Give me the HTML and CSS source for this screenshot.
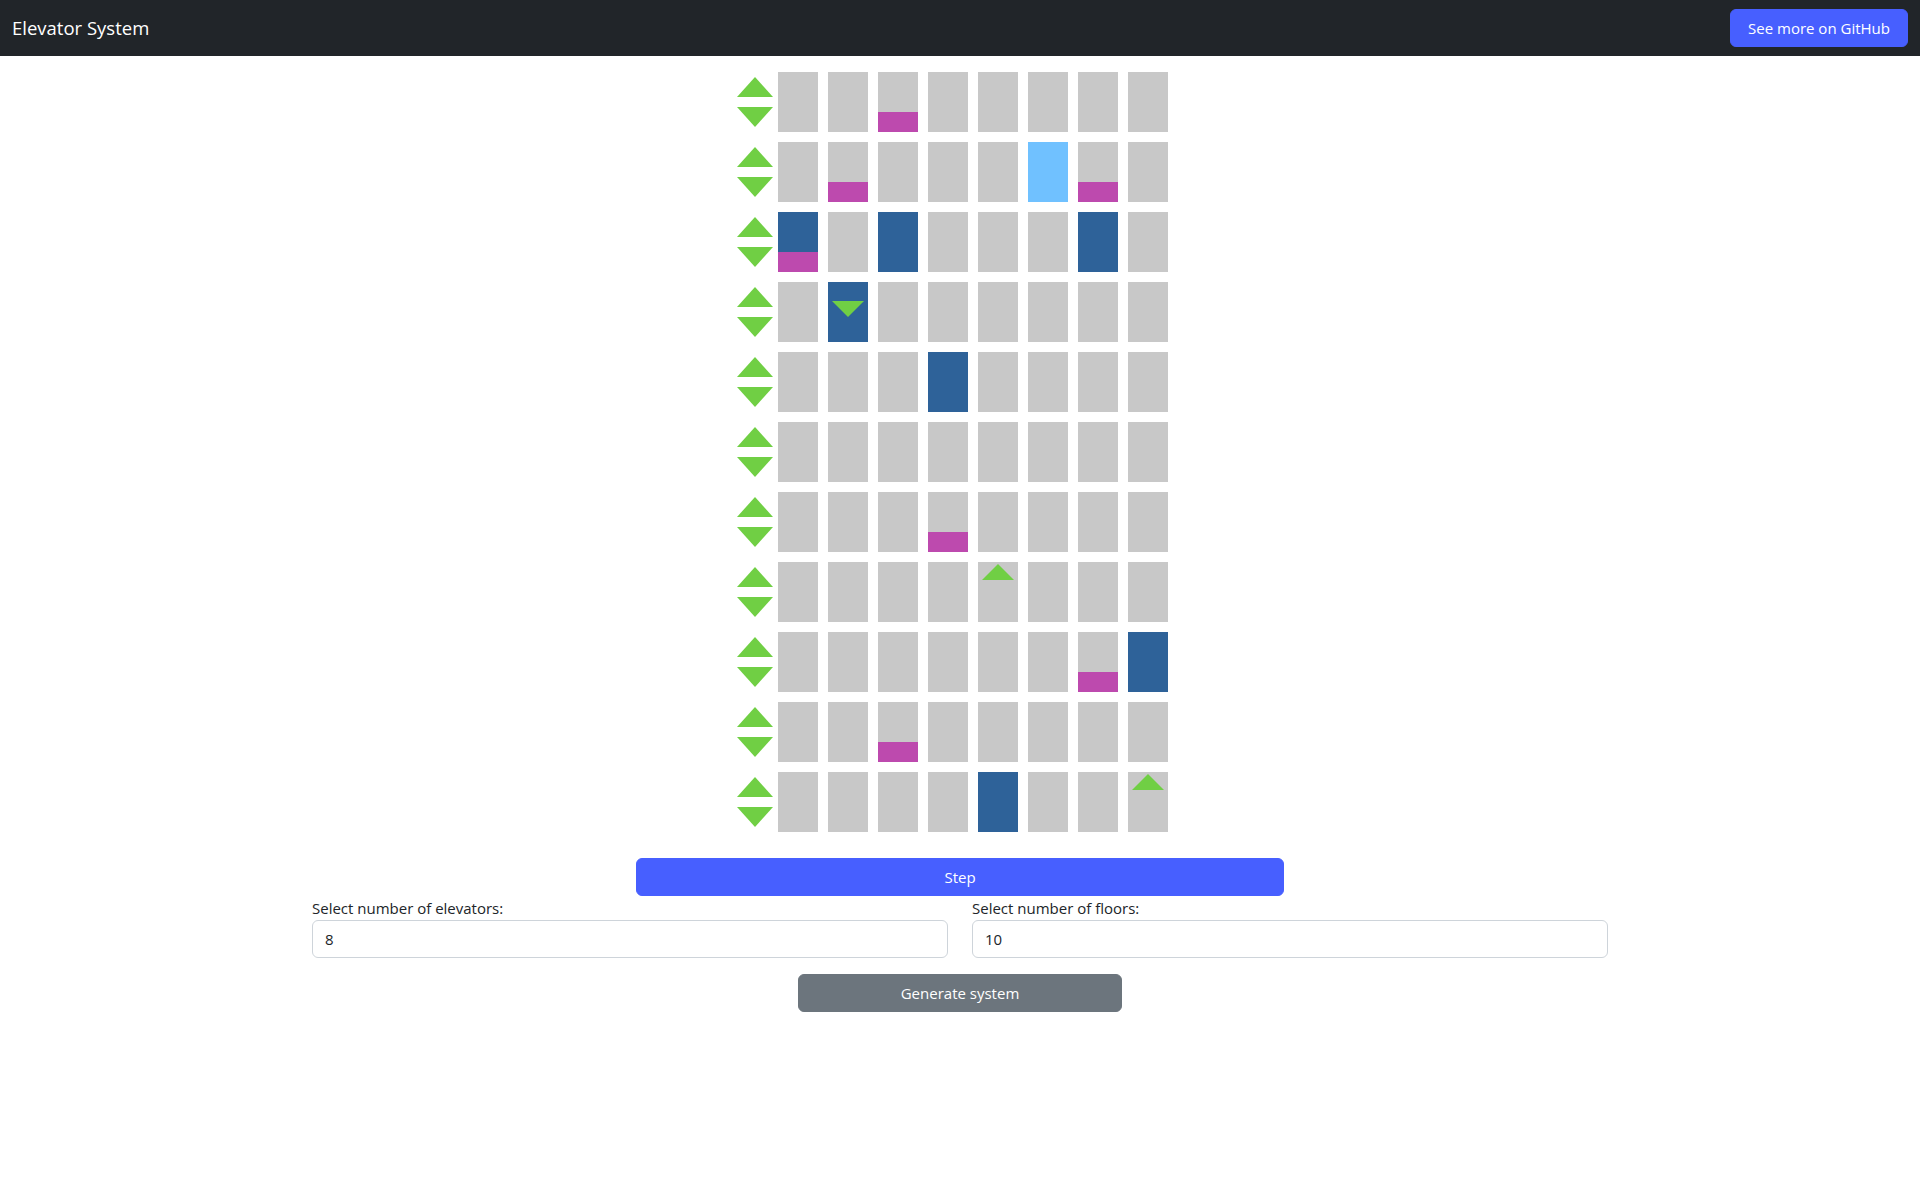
FILE: index.html
```html
<!DOCTYPE html>
<html lang="en">
<head>
<meta charset="utf-8">
<title>Elevator System</title>
<link rel="stylesheet" href="styles.css">
</head>
<body>
<nav class="navbar">
  <span class="brand">Elevator System</span>
  <a class="btn btn-primary" href="#">See more on GitHub</a>
</nav>

<main>
  <div class="building">
    <div class="floor">
      <div class="calls"><svg class="big" viewBox="0 0 36 20"><polygon points="18,0 36,20 0,20"/></svg><svg class="big" viewBox="0 0 36 20"><polygon points="0,0 36,0 18,20"/></svg></div>
      <div class="shaft"></div><div class="shaft"></div><div class="shaft"><span class="stop"></span></div><div class="shaft"></div><div class="shaft"></div><div class="shaft"></div><div class="shaft"></div><div class="shaft"></div>
    </div>
    <div class="floor">
      <div class="calls"><svg class="big" viewBox="0 0 36 20"><polygon points="18,0 36,20 0,20"/></svg><svg class="big" viewBox="0 0 36 20"><polygon points="0,0 36,0 18,20"/></svg></div>
      <div class="shaft"></div><div class="shaft"><span class="stop"></span></div><div class="shaft"></div><div class="shaft"></div><div class="shaft"></div><div class="shaft open"></div><div class="shaft"><span class="stop"></span></div><div class="shaft"></div>
    </div>
    <div class="floor">
      <div class="calls"><svg class="big" viewBox="0 0 36 20"><polygon points="18,0 36,20 0,20"/></svg><svg class="big" viewBox="0 0 36 20"><polygon points="0,0 36,0 18,20"/></svg></div>
      <div class="shaft car"><span class="stop"></span></div><div class="shaft"></div><div class="shaft car"></div><div class="shaft"></div><div class="shaft"></div><div class="shaft"></div><div class="shaft car"></div><div class="shaft"></div>
    </div>
    <div class="floor">
      <div class="calls"><svg class="big" viewBox="0 0 36 20"><polygon points="18,0 36,20 0,20"/></svg><svg class="big" viewBox="0 0 36 20"><polygon points="0,0 36,0 18,20"/></svg></div>
      <div class="shaft"></div><div class="shaft car"><svg class="dir down" viewBox="0 0 32 16"><polygon points="0,0 32,0 16,16"/></svg></div><div class="shaft"></div><div class="shaft"></div><div class="shaft"></div><div class="shaft"></div><div class="shaft"></div><div class="shaft"></div>
    </div>
    <div class="floor">
      <div class="calls"><svg class="big" viewBox="0 0 36 20"><polygon points="18,0 36,20 0,20"/></svg><svg class="big" viewBox="0 0 36 20"><polygon points="0,0 36,0 18,20"/></svg></div>
      <div class="shaft"></div><div class="shaft"></div><div class="shaft"></div><div class="shaft car"></div><div class="shaft"></div><div class="shaft"></div><div class="shaft"></div><div class="shaft"></div>
    </div>
    <div class="floor">
      <div class="calls"><svg class="big" viewBox="0 0 36 20"><polygon points="18,0 36,20 0,20"/></svg><svg class="big" viewBox="0 0 36 20"><polygon points="0,0 36,0 18,20"/></svg></div>
      <div class="shaft"></div><div class="shaft"></div><div class="shaft"></div><div class="shaft"></div><div class="shaft"></div><div class="shaft"></div><div class="shaft"></div><div class="shaft"></div>
    </div>
    <div class="floor">
      <div class="calls"><svg class="big" viewBox="0 0 36 20"><polygon points="18,0 36,20 0,20"/></svg><svg class="big" viewBox="0 0 36 20"><polygon points="0,0 36,0 18,20"/></svg></div>
      <div class="shaft"></div><div class="shaft"></div><div class="shaft"></div><div class="shaft"><span class="stop"></span></div><div class="shaft"></div><div class="shaft"></div><div class="shaft"></div><div class="shaft"></div>
    </div>
    <div class="floor">
      <div class="calls"><svg class="big" viewBox="0 0 36 20"><polygon points="18,0 36,20 0,20"/></svg><svg class="big" viewBox="0 0 36 20"><polygon points="0,0 36,0 18,20"/></svg></div>
      <div class="shaft"></div><div class="shaft"></div><div class="shaft"></div><div class="shaft"></div><div class="shaft"><svg class="dir up" viewBox="0 0 32 16"><polygon points="16,0 32,16 0,16"/></svg></div><div class="shaft"></div><div class="shaft"></div><div class="shaft"></div>
    </div>
    <div class="floor">
      <div class="calls"><svg class="big" viewBox="0 0 36 20"><polygon points="18,0 36,20 0,20"/></svg><svg class="big" viewBox="0 0 36 20"><polygon points="0,0 36,0 18,20"/></svg></div>
      <div class="shaft"></div><div class="shaft"></div><div class="shaft"></div><div class="shaft"></div><div class="shaft"></div><div class="shaft"></div><div class="shaft"><span class="stop"></span></div><div class="shaft car"></div>
    </div>
    <div class="floor">
      <div class="calls"><svg class="big" viewBox="0 0 36 20"><polygon points="18,0 36,20 0,20"/></svg><svg class="big" viewBox="0 0 36 20"><polygon points="0,0 36,0 18,20"/></svg></div>
      <div class="shaft"></div><div class="shaft"></div><div class="shaft"><span class="stop"></span></div><div class="shaft"></div><div class="shaft"></div><div class="shaft"></div><div class="shaft"></div><div class="shaft"></div>
    </div>
    <div class="floor">
      <div class="calls"><svg class="big" viewBox="0 0 36 20"><polygon points="18,0 36,20 0,20"/></svg><svg class="big" viewBox="0 0 36 20"><polygon points="0,0 36,0 18,20"/></svg></div>
      <div class="shaft"></div><div class="shaft"></div><div class="shaft"></div><div class="shaft"></div><div class="shaft car"></div><div class="shaft"></div><div class="shaft"></div><div class="shaft"><svg class="dir up" viewBox="0 0 32 16"><polygon points="16,0 32,16 0,16"/></svg></div>
    </div>
  </div>

  <div class="container">
    <button class="btn btn-primary btn-step" type="button">Step</button>
    <div class="form-row">
      <div class="field">
        <label for="elevators">Select number of elevators:</label>
        <input id="elevators" class="form-control" type="number" value="8">
      </div>
      <div class="field">
        <label for="floors">Select number of floors:</label>
        <input id="floors" class="form-control" type="number" value="10">
      </div>
    </div>
    <button class="btn btn-secondary btn-generate" type="button">Generate system</button>
  </div>
</main>
</body>
</html>
```

FILE: styles.css
```css
* {
  box-sizing: border-box;
}

body {
  margin: 0;
  font-family: "Open Sans", "Noto Sans", sans-serif;
  font-size: 16px;
  line-height: 1.5;
  color: #212529;
  background: #fff;
}

.navbar {
  height: 56px;
  background: #212529;
  display: flex;
  align-items: center;
  justify-content: space-between;
  padding: 0 12px;
}

.brand {
  color: #fff;
  font-size: 18.5px;
  line-height: 30px;
}

.btn {
  display: inline-flex;
  align-items: center;
  justify-content: center;
  height: 38px;
  padding: 0 12px;
  border: 1px solid transparent;
  border-radius: 6px;
  font-family: inherit;
  font-size: 15px;
  color: #fff;
  text-decoration: none;
  cursor: pointer;
}

.btn-primary {
  background: #475fff;
  border-color: #475fff;
}

.btn-secondary {
  background: #6c757d;
  border-color: #6c757d;
}

.navbar .btn {
  width: 178px;
}

.building {
  margin-top: 16px;
  display: flex;
  flex-direction: column;
  align-items: center;
  gap: 10px;
  padding-right: 15px;
}

.floor {
  display: flex;
  height: 60px;
}

.calls {
  width: 36px;
  margin-right: 5px;
  display: flex;
  flex-direction: column;
  justify-content: center;
  gap: 10px;
}

.big {
  display: block;
  width: 36px;
  height: 20px;
  fill: #70cf44;
}

.shaft {
  position: relative;
  width: 40px;
  height: 60px;
  margin-right: 10px;
  background: #c8c8c8;
}

.shaft:last-child {
  margin-right: 0;
}

.shaft.car {
  background: #2e6299;
}

.shaft.open {
  background: #70c1ff;
}

.stop {
  position: absolute;
  left: 0;
  right: 0;
  bottom: 0;
  height: 20px;
  background: #bd4aae;
}

.dir {
  position: absolute;
  left: 4px;
  width: 32px;
  height: 16px;
  fill: #70cf44;
}

.dir.up {
  top: 2px;
}

.dir.down {
  top: 19px;
}

.container {
  width: 1296px;
  margin: 26px auto 0;
  display: flex;
  flex-direction: column;
}

.btn-step {
  width: 50%;
  align-self: center;
}

.form-row {
  display: grid;
  grid-template-columns: 1fr 1fr;
  column-gap: 24px;
}

.field label {
  display: block;
  font-size: 15px;
  line-height: 24px;
}

.form-control {
  display: block;
  width: 100%;
  height: 38px;
  padding: 0 12px;
  border: 1px solid #ced4da;
  border-radius: 6px;
  font-family: inherit;
  font-size: 15px;
  color: #212529;
  background: #fff;
}

.form-control::-webkit-inner-spin-button,
.form-control::-webkit-outer-spin-button {
  -webkit-appearance: none;
  margin: 0;
}

.btn-generate {
  width: 25%;
  align-self: center;
  margin-top: 16px;
}
```
